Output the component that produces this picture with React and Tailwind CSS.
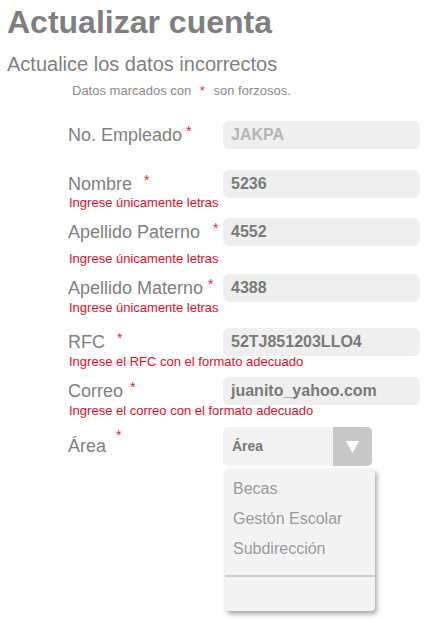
import React from "react";

const fields = [
  { label: "No. Empleado", value: "JAKPA", disabled: true, star: "ml-[4px]", top: "mt-[0px]" },
  { label: "Nombre", value: "5236", star: "ml-[12px]", top: "mt-[21px]", error: "Ingrese únicamente letras", errTop: "-mt-[3px]" },
  { label: "Apellido Paterno", value: "4552", star: "ml-[13px]", top: "mt-[8px]", error: "Ingrese únicamente letras", errTop: "mt-[5px]" },
  { label: "Apellido Materno", value: "4388", star: "ml-[5px]", top: "mt-[8px]", error: "Ingrese únicamente letras", errTop: "-mt-[2px]" },
  { label: "RFC", value: "52TJ851203LLO4", star: "ml-[12px]", top: "mt-[13px]", error: "Ingrese el RFC con el formato adecuado", errTop: "-mt-[2px]" },
  { label: "Correo", value: "juanito_yahoo.com", star: "ml-[7px]", top: "mt-[8px]", error: "Ingrese el correo con el formato adecuado", errTop: "-mt-[2px]" },
];

const Star = ({ className }) => (
  <span className={`inline-block align-top text-[14px] leading-[14px] text-[#e2243b] ${className}`}>*</span>
);

export default function App() {
  return (
    <div className="w-[431px] h-[619px] bg-white font-['Liberation_Sans',Arial,sans-serif] overflow-hidden">
      <h1 className="pl-[7px] pt-[6px] text-[32px] leading-[32px] font-bold text-[#7f7f7f]">
        Actualizar cuenta
      </h1>
      <h2 className="pl-[7px] mt-[16px] text-[20px] leading-[20px] text-[#808080]">
        Actualice los datos incorrectos
      </h2>
      <p className="pl-[72px] mt-[9px] text-[13px] leading-[15px] text-[#8a8a8a]">
        Datos marcados con <span className="mx-[5px] text-[#d9304f]">*</span> son forzosos.
      </p>

      <div className="pl-[68px] mt-[23px]">
        {fields.map((f) => (
          <div key={f.label} className={f.top}>
            <div className="flex items-center">
              <div className="w-[155px] text-[18px] leading-[28px] text-[#808080] whitespace-nowrap">
                {f.label}
                <Star className={`mt-[3px] ${f.star}`} />
              </div>
              <div
                className={`w-[197px] h-[28px] rounded-[6px] bg-[#efefef] pl-[8px] flex items-center text-[16px] font-bold ${
                  f.disabled ? "text-[#b5b5b5]" : "text-[#7a7a7a]"
                }`}
              >
                {f.value}
              </div>
            </div>
            {f.error && (
              <p className={`${f.errTop} pl-[1px] text-[13px] leading-[15px] text-[#e0102a]`}>{f.error}</p>
            )}
          </div>
        ))}

        {/* Área select */}
        <div className="mt-[9px] flex items-start">
          <div className="w-[155px] text-[18px] leading-[39px] text-[#808080]">
            Área
            <Star className="ml-[10px] mt-[1px]" />
          </div>
          <div className="flex flex-col">
            <div className="w-[149px] h-[39px] rounded-[5px] bg-[#f2f2f2] flex overflow-hidden">
              <div className="flex-1 pl-[9px] flex items-center text-[14px] font-bold text-[#777777]">Área</div>
              <div className="w-[39px] bg-[#c8c8c8] flex items-center justify-center">
                <svg width="13" height="12" viewBox="0 0 13 12">
                  <path d="M0 0 L13 0 L6.5 12 Z" fill="#ffffff" />
                </svg>
              </div>
            </div>
            <div className="ml-[2px] mt-[3px] w-[150px] h-[142px] rounded-[4px] bg-[#f3f3f3] shadow-[2px_3px_5px_rgba(0,0,0,0.35)] pt-[5px] flex flex-col">
              {["Becas", "Gestón Escolar", "Subdirección"].map((o) => (
                <div key={o} className="pl-[8px] text-[16px] leading-[30px] text-[#9a9a9a]">
                  {o}
                </div>
              ))}
              <div className="mt-[11px] h-[2px] bg-[#cccccc]" />
            </div>
          </div>
        </div>
      </div>
    </div>
  );
}
